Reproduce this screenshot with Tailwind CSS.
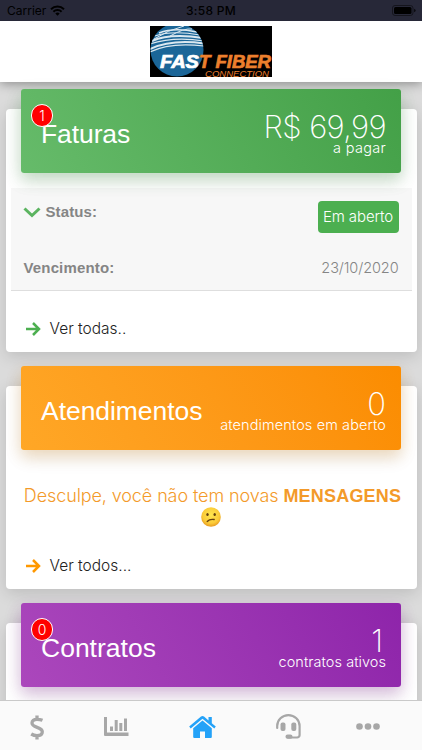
<!DOCTYPE html>
<html lang="pt-BR">
<head>
    <meta charset="UTF-8">
    <meta name="viewport" content="width=device-width, initial-scale=1.0">
    <title>Fast Fiber Connection</title>
    <script src="https://cdn.jsdelivr.net/npm/@tailwindcss/browser@4"></script>
</head>
<body class="bg-[#dbdbdb] font-['Inter','Liberation_Sans',sans-serif] font-light">
    <div class="h-[750px] flex flex-col overflow-hidden">
        <!-- Status bar -->
        <div class="h-[21px] shrink-0 bg-[#272838] grid grid-cols-3 items-center px-2 text-black font-normal text-[12px] leading-none relative z-20">
            <div class="flex items-center gap-1">
                <span class="-ml-px">Carrier</span>
                <svg class="w-[15px] h-[11px]" viewBox="0 0 15 11" fill="none" stroke="#000" stroke-width="2">
                    <path d="M1 4.2a9.3 9.3 0 0 1 13 0M3.4 6.7a5.8 5.8 0 0 1 8.2 0"/>
                    <path d="M7.5 10.8 5.3 8.6a3.1 3.1 0 0 1 4.4 0z" fill="#000" stroke="none"/>
                </svg>
            </div>
            <span class="text-center font-medium tracking-[0.3px]">3:58 PM</span>
            <svg class="w-6 h-[11px] justify-self-end -mr-0.5" viewBox="0 0 24 11">
                <rect x=".5" y=".5" width="20.5" height="10" rx="2.6" fill="none" stroke="#15151d"/>
                <rect x="2" y="2" width="17.5" height="7" rx="1.5"/>
                <path d="M22.3 3.7v3.6q1.2-.6 1.2-1.8t-1.2-1.8"/>
            </svg>
        </div>

        <!-- Logo header -->
        <header class="h-[61px] shrink-0 bg-white flex justify-center pt-[5px] shadow-[0_2px_10px_rgba(0,0,0,0.35)]">
            <svg class="w-[122px] h-[51px]" viewBox="0 0 122 51">
                <defs>
                    <clipPath id="globe"><circle cx="27" cy="24" r="26.5"/></clipPath>
                </defs>
                <rect width="122" height="51" fill="#000"/>
                <g clip-path="url(#globe)">
                    <rect width="54" height="51" fill="#1b6698"/>
                    <g fill="none" stroke="#dbe8f0">
                        <path d="M0 26Q20 16 54 20" stroke-width="1.2"/>
                        <path d="M0 23Q22 13 54 17.5" stroke-width="2"/>
                        <path d="M0 18Q24 10 54 15" stroke-width="1.2"/>
                        <path d="M2 15Q20 7 53 12" stroke-width="2"/>
                        <path d="M5 10Q22 4 50 9" stroke-width="1.2"/>
                        <path d="M9 7Q24 1 47 6" stroke-width="1.5"/>
                        <path d="M4 13Q18 4 34 0" stroke-width="1"/>
                        <path d="M20 10Q34 2 42 3" stroke-width="1"/>
                    </g>
                </g>
                <g font-family="Liberation Sans, sans-serif" font-style="italic">
                    <text x="10" y="42" font-size="17.5" font-weight="700" fill="#fff" stroke="#fff" stroke-width=".7" textLength="39" lengthAdjust="spacingAndGlyphs">FAS</text>
                    <text x="49" y="42" font-size="17.5" font-weight="700" fill="#ec7f2d" stroke="#ec7f2d" stroke-width=".7" textLength="72" lengthAdjust="spacingAndGlyphs">T FIBER</text>
                    <text x="55" y="50.5" font-size="9" fill="#ec7f2d" textLength="64" lengthAdjust="spacingAndGlyphs">CONNECTION</text>
                </g>
            </svg>
        </header>

        <main class="flex-1 min-h-0 px-[5.5px] pt-[27px] flex flex-col gap-[34.5px]">
            <!-- Faturas -->
            <section class="h-[242.5px] shrink-0 bg-white rounded shadow-[0_4px_16px_rgba(0,0,0,0.14)] px-[5px]">
                <div class="relative -top-5 -mb-5 mx-[10.5px] h-[84px] rounded-[3px] px-[20px] flex justify-between text-white bg-linear-60 from-[#66bb6a] to-[#43a047] shadow-[0_6px_16px_rgba(76,175,80,0.25),0_8px_18px_rgba(0,0,0,0.1)]">
                    <span class="absolute z-10 left-[10px] top-[15px] w-[22px] h-[23px] rounded-full bg-[#f00] border border-white flex items-center justify-center text-[14px]">1</span>
                    <h2 class="font-['Liberation_Sans',sans-serif] font-normal text-[26.5px] leading-none mt-[32px] tracking-[-0.1px]">Faturas</h2>
                    <div class="text-right -mr-[5px]">
                        <div class="text-[31px] font-extralight leading-none mt-[22px] tracking-[-0.6px]">R$ 69,99</div>
                        <div class="text-[14.5px] leading-none -mt-px tracking-[0.3px]">a pagar</div>
                    </div>
                </div>
                <div class="mt-[15px] h-[103px] bg-[#f7f7f7] border-b border-[#dedede] px-[13px] text-[#858585]">
                    <div class="flex justify-between items-start pt-[13px]">
                        <div class="flex items-center mt-[2px]">
                            <svg class="w-[18px] h-[11px] mr-[5px] -ml-px" viewBox="0 0 18 11" fill="none" stroke="#5bb460" stroke-width="3"><path d="M1.5 1.5 9 8.5l7.5-7"/></svg>
                            <span class="font-['Liberation_Sans',sans-serif] font-bold text-[15px] leading-[18px] tracking-[0.1px]">Status:</span>
                        </div>
                        <span class="w-[81px] h-[32px] rounded bg-[#4caf50] text-white text-[15px] tracking-[-0.1px] flex items-center justify-center">Em aberto</span>
                    </div>
                    <div class="flex justify-between items-center mt-[26px] leading-[18px]">
                        <span class="font-['Liberation_Sans',sans-serif] font-bold text-[15px] tracking-[0.15px]">Vencimento:</span>
                        <span class="text-[14.5px] tracking-[-0.1px]">23/10/2020</span>
                    </div>
                </div>
                <div class="flex items-center gap-[9px] pl-[15px] mt-[28px] text-[#222] text-[15.5px] leading-[20px]">
                    <svg class="w-[15px] h-[14px]" viewBox="0 0 15 14" fill="none" stroke="#4caf50" stroke-width="2.5"><path d="M0 7h13M7 1l6 6-6 6"/></svg>
                    <span>Ver todas..</span>
                </div>
            </section>

            <!-- Atendimentos -->
            <section class="h-[202.5px] shrink-0 bg-white rounded shadow-[0_4px_16px_rgba(0,0,0,0.14)] px-[5px]">
                <div class="relative -top-5 -mb-5 mx-[10.5px] h-[84px] rounded-[3px] px-[20px] flex justify-between text-white bg-linear-60 from-[#ffa726] to-[#fb8c00] shadow-[0_6px_16px_rgba(255,152,0,0.2),0_8px_18px_rgba(0,0,0,0.1)]">
                    <h2 class="font-['Liberation_Sans',sans-serif] font-normal text-[26.5px] leading-none mt-[32px] tracking-[-0.05px]">Atendimentos</h2>
                    <div class="text-right -mr-[5px]">
                        <div class="text-[31px] font-extralight leading-none mt-[22px]">0</div>
                        <div class="text-[14.5px] leading-none -mt-px tracking-[0.1px]">atendimentos em aberto</div>
                    </div>
                </div>
                <div class="mt-[35px] text-center text-[#f39a2a] text-[18px] leading-[22px] whitespace-nowrap">
                    <p class="ml-[3px] tracking-[-0.1px]">Desculpe, você não tem novas <b class="font-['Liberation_Sans',sans-serif] font-bold tracking-[0.2px]">MENSAGENS</b></p>
                    <svg class="w-5 h-5 mx-auto" viewBox="0 0 20 20">
                        <defs>
                            <radialGradient id="face" cx=".5" cy=".4" r=".6">
                                <stop offset="0" stop-color="#ffe650"/>
                                <stop offset=".7" stop-color="#fbcb38"/>
                                <stop offset="1" stop-color="#e79a21"/>
                            </radialGradient>
                        </defs>
                        <circle cx="10" cy="10" r="9.8" fill="url(#face)"/>
                        <ellipse cx="6.5" cy="7.5" rx="1.2" ry="1.6" fill="#66400e"/>
                        <ellipse cx="13.7" cy="7.5" rx="1.2" ry="1.6" fill="#66400e"/>
                        <path d="M6.2 14.5q2.5-2.8 7-2" fill="none" stroke="#66400e" stroke-width="1.3" stroke-linecap="round"/>
                    </svg>
                </div>
                <div class="flex items-center gap-[9px] pl-[15px] mt-[29px] text-[#222] text-[15.5px] leading-[20px]">
                    <svg class="w-[15px] h-[14px]" viewBox="0 0 15 14" fill="none" stroke="#ff9800" stroke-width="2.5"><path d="M0 7h13M7 1l6 6-6 6"/></svg>
                    <span>Ver todos...</span>
                </div>
            </section>

            <!-- Contratos -->
            <section class="h-[202px] shrink-0 bg-white rounded shadow-[0_4px_16px_rgba(0,0,0,0.14)] px-[5px]">
                <div class="relative -top-5 -mb-5 mx-[10.5px] h-[84px] rounded-[3px] px-[20px] flex justify-between text-white bg-linear-60 from-[#ab47bc] to-[#8e24aa] shadow-[0_6px_16px_rgba(156,39,176,0.25),0_8px_18px_rgba(0,0,0,0.1)]">
                    <span class="absolute z-10 left-[10px] top-[15px] w-[22px] h-[23px] rounded-full bg-[#f00] border border-white flex items-center justify-center text-[14px]">0</span>
                    <h2 class="font-['Liberation_Sans',sans-serif] font-normal text-[26.5px] leading-none mt-[32px]">Contratos</h2>
                    <div class="text-right -mr-[5px]">
                        <div class="text-[31px] font-extralight leading-none mt-[22px] pr-[3px]">1</div>
                        <div class="text-[14.5px] leading-none -mt-px tracking-[0.05px]">contratos ativos</div>
                    </div>
                </div>
            </section>
        </main>

        <!-- Bottom navigation -->
        <nav class="h-[50px] shrink-0 bg-[#fafafa] border-t border-[#c9c9c9] relative z-10 flex text-[#a7a7a7]">
            <a class="w-[74px] flex items-center justify-center pt-[3px]">
                <svg class="w-[14px] h-[25px]" viewBox="0 0 14 25" fill="none" stroke="currentColor" stroke-width="3.3"><path d="M7 .5v4M7 20.5v4M12.5 5.3C10.5 4.5 9 4.3 7 4.3c-3.3 0-5 1.5-5 3.7 0 5.2 10.3 3.5 10.3 8.8 0 2.5-2 3.9-5.3 3.9-2.2 0-4-.6-5.8-1.7"/></svg>
            </a>
            <a class="w-[84px] flex items-center justify-center pt-[2px]">
                <svg class="w-[25px] h-[19px]" viewBox="0 0 25 19" fill="currentColor"><path d="M0 0h3v15.5h21.5V19H1a1 1 0 0 1-1-1zM6 9.5h3V14H6zM10.700 3h3v11h-3zM15.300 6h3v8h-3zM20 1.500h3V14h-3z"/></svg>
            </a>
            <a class="w-[88px] flex items-center justify-center pt-[2px] text-[#24a2f8]">
                <svg class="w-[27px] h-[22px]" viewBox="0 0 27 22" fill="currentColor"><path d="M13.5 0Q14.2 0 15 .6L19.5 4.4V1h3.3v6.2l4 3.4-1.5 1.9L13.5 2.7 1.7 12.5.2 10.6 12 .6q.8-.6 1.5-.6"/><path d="m13.5 4.5 9.3 7.7V21q0 1-1 1H16v-6.5h-5V22H5.2q-1 0-1-1v-8.800z"/></svg>
            </a>
            <a class="w-[84px] flex items-center justify-center pt-[2px]">
                <svg class="w-[25px] h-[25px]" viewBox="0 0 25 25"><path d="M1.2 14v-2a11.2 10.9 0 0 1 22.4 0v9a2.5 2.5 0 0 1-2.5 2.5H12" fill="none" stroke="currentColor" stroke-width="2.2" stroke-linecap="round"/><rect x="4.5" y="8.5" width="5" height="8.5" rx="2" fill="currentColor"/><rect x="15.3" y="8.5" width="5" height="8.5" rx="2" fill="currentColor"/><rect x="9.5" y="20.5" width="7" height="4.3" rx="2.1" fill="currentColor"/></svg>
            </a>
            <a class="w-[76px] flex items-center justify-center pt-[2px]">
                <svg class="w-6 h-[7px]" viewBox="0 0 24 7" fill="currentColor"><circle cx="3.5" cy="3.5" r="3.3"/><circle cx="12" cy="3.5" r="3.3"/><circle cx="20.5" cy="3.5" r="3.3"/></svg>
            </a>
        </nav>
    </div>
</body>
</html>
